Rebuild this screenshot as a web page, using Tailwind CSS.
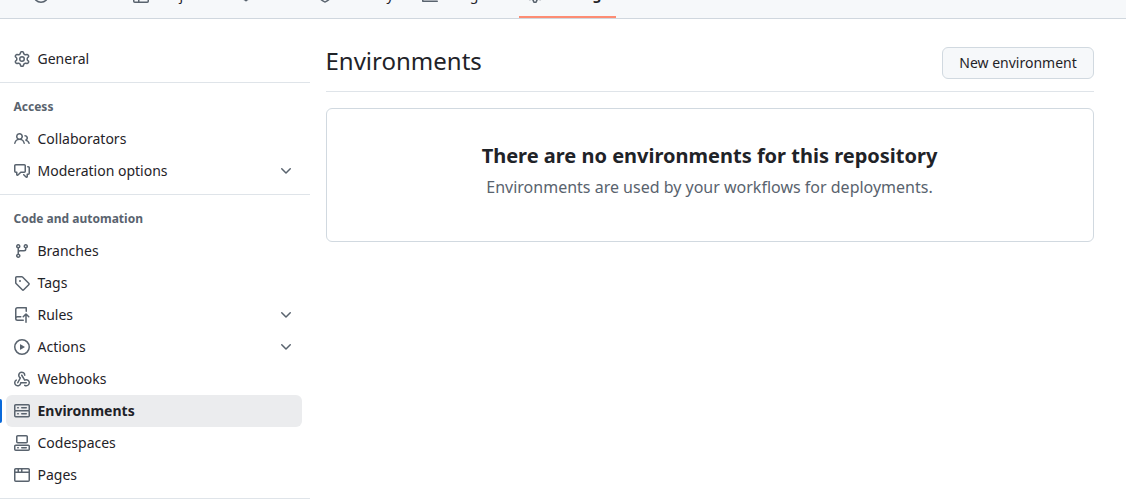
<!DOCTYPE html>
<html lang="en">
<head>
<meta charset="utf-8">
<title>Environments</title>
<script src="https://cdn.jsdelivr.net/npm/@tailwindcss/browser@4"></script>
</head>
<body class="h-[503px] overflow-hidden bg-white font-['Noto_Sans',sans-serif] text-sm leading-5 text-[#1f2328]">
<svg class="hidden" xmlns="http://www.w3.org/2000/svg">
<symbol id="gear" viewBox="0 0 16 16"><path d="M8 0a8.2 8.2 0 0 1 .701.031C9.444.095 9.99.645 10.16 1.29l.288 1.107c.018.066.079.158.212.224.231.114.454.243.668.386.123.082.233.09.299.071l1.103-.303c.644-.176 1.392.021 1.82.63.27.385.506.792.704 1.218.315.675.111 1.422-.364 1.891l-.814.806c-.049.048-.098.147-.088.294.016.257.016.515 0 .772-.01.147.038.246.088.294l.814.806c.475.469.679 1.216.364 1.891a7.977 7.977 0 0 1-.704 1.217c-.428.61-1.176.807-1.82.63l-1.102-.302c-.067-.019-.177-.011-.3.071a5.909 5.909 0 0 1-.668.386c-.133.066-.194.158-.211.224l-.29 1.106c-.168.646-.715 1.196-1.458 1.26a8.006 8.006 0 0 1-1.402 0c-.743-.064-1.289-.614-1.458-1.26l-.289-1.106c-.018-.066-.079-.158-.212-.224a5.738 5.738 0 0 1-.668-.386c-.123-.082-.233-.09-.299-.071l-1.103.303c-.644.176-1.392-.021-1.82-.63a8.12 8.12 0 0 1-.704-1.218c-.315-.675-.111-1.422.363-1.891l.815-.806c.05-.048.098-.147.088-.294a6.214 6.214 0 0 1 0-.772c.01-.147-.038-.246-.088-.294l-.815-.806C.635 6.045.431 5.298.746 4.623a7.92 7.92 0 0 1 .704-1.217c.428-.61 1.176-.807 1.82-.63l1.102.302c.067.019.177.011.3-.071.214-.143.437-.272.668-.386.133-.066.194-.158.211-.224l.29-1.106C6.009.645 6.556.095 7.299.03 7.53.01 7.764 0 8 0Zm-.571 1.525c-.036.003-.108.036-.137.146l-.289 1.105c-.147.561-.549.967-.998 1.189-.173.086-.34.183-.5.29-.417.278-.97.423-1.529.27l-1.103-.303c-.109-.03-.175.016-.195.045-.22.312-.412.644-.573.99-.014.031-.021.11.059.19l.815.806c.411.406.562.957.53 1.456a4.709 4.709 0 0 0 0 .582c.032.499-.119 1.05-.53 1.456l-.815.806c-.081.08-.073.159-.059.19.162.346.353.677.573.989.02.03.085.076.195.046l1.102-.303c.56-.153 1.113-.008 1.53.27.161.107.328.204.501.29.447.222.85.629.997 1.189l.289 1.105c.029.109.101.143.137.146a6.6 6.6 0 0 0 1.142 0c.036-.003.108-.036.137-.146l.289-1.105c.147-.561.549-.967.998-1.189.173-.086.34-.183.5-.29.417-.278.97-.423 1.529-.27l1.103.303c.109.029.175-.016.195-.045.22-.313.411-.644.573-.99.014-.031.021-.11-.059-.19l-.815-.806c-.411-.406-.562-.957-.53-1.456a4.709 4.709 0 0 0 0-.582c-.032-.499.119-1.05.53-1.456l.815-.806c.081-.08.073-.159.059-.19a6.464 6.464 0 0 0-.573-.989c-.02-.03-.085-.076-.195-.046l-1.102.303c-.56.153-1.113.008-1.53-.27a4.44 4.44 0 0 0-.501-.29c-.447-.222-.85-.629-.997-1.189l-.289-1.105c-.029-.11-.101-.143-.137-.146a6.6 6.6 0 0 0-1.142 0ZM11 8a3 3 0 1 1-6 0 3 3 0 0 1 6 0ZM9.5 8a1.5 1.5 0 1 0-3.001.001A1.5 1.5 0 0 0 9.5 8Z"/></symbol>
<symbol id="people" viewBox="0 0 16 16"><path d="M2 5.5a3.5 3.5 0 1 1 5.898 2.549 5.508 5.508 0 0 1 3.034 4.084.75.75 0 1 1-1.482.235 4 4 0 0 0-7.9 0 .75.75 0 0 1-1.482-.236A5.507 5.507 0 0 1 3.102 8.05 3.493 3.493 0 0 1 2 5.5ZM11 4a3.001 3.001 0 0 1 2.22 5.018 5.01 5.01 0 0 1 2.56 3.012.749.749 0 0 1-.885.954.752.752 0 0 1-.549-.514 3.507 3.507 0 0 0-2.522-2.372.75.75 0 0 1-.574-.73v-.352a.75.75 0 0 1 .416-.672A1.5 1.5 0 0 0 11 5.5.75.75 0 0 1 11 4Zm-5.5-.5a2 2 0 1 0-.001 3.999A2 2 0 0 0 5.5 3.5Z"/></symbol>
<symbol id="discussion" viewBox="0 0 16 16"><path d="M1.75 1h8.5c.966 0 1.75.784 1.75 1.75v5.5A1.75 1.75 0 0 1 10.25 10H7.061l-2.574 2.573A1.458 1.458 0 0 1 2 11.543V10h-.25A1.75 1.75 0 0 1 0 8.25v-5.5C0 1.784.784 1 1.75 1ZM1.5 2.75v5.5c0 .138.112.25.25.25h1a.75.75 0 0 1 .75.75v2.19l2.72-2.72a.749.749 0 0 1 .53-.22h3.5a.25.25 0 0 0 .25-.25v-5.5a.25.25 0 0 0-.25-.25h-8.5a.25.25 0 0 0-.25.25Zm13 2a.25.25 0 0 0-.25-.25h-.5a.75.75 0 0 1 0-1.5h.5c.966 0 1.75.784 1.75 1.75v5.5A1.75 1.75 0 0 1 14.25 12H14v1.543a1.458 1.458 0 0 1-2.487 1.03L9.22 12.28a.749.749 0 0 1 .326-1.275.749.749 0 0 1 .734.215l2.22 2.22v-2.19a.75.75 0 0 1 .75-.75h1a.25.25 0 0 0 .25-.25Z"/></symbol>
<symbol id="branch" viewBox="0 0 16 16"><path d="M9.5 3.25a2.25 2.25 0 1 1 3 2.122V6A2.5 2.5 0 0 1 10 8.5H6a1 1 0 0 0-1 1v1.128a2.251 2.251 0 1 1-1.5 0V5.372a2.25 2.25 0 1 1 1.5 0v1.836A2.493 2.493 0 0 1 6 7h4a1 1 0 0 0 1-1v-.628A2.25 2.25 0 0 1 9.5 3.25Zm-6 0a.75.75 0 1 0 1.5 0 .75.75 0 0 0-1.5 0Zm8.25-.75a.75.75 0 1 0 0 1.5.75.75 0 0 0 0-1.5ZM4.25 12a.75.75 0 1 0 0 1.5.75.75 0 0 0 0-1.5Z"/></symbol>
<symbol id="tag" viewBox="0 0 16 16"><path d="M1 7.775V2.75C1 1.784 1.784 1 2.75 1h5.025c.464 0 .91.184 1.238.513l6.25 6.25a1.75 1.75 0 0 1 0 2.474l-5.026 5.026a1.75 1.75 0 0 1-2.474 0l-6.25-6.25A1.752 1.752 0 0 1 1 7.775Zm1.5 0c0 .066.026.13.073.177l6.25 6.25a.25.25 0 0 0 .354 0l5.025-5.025a.25.25 0 0 0 0-.354l-6.25-6.25a.25.25 0 0 0-.177-.073H2.75a.25.25 0 0 0-.25.25ZM6 5a1 1 0 1 1 0 2 1 1 0 0 1 0-2Z"/></symbol>
<symbol id="push" viewBox="0 0 16 16"><path d="M1 2.5A2.5 2.5 0 0 1 3.5 0h8.75a.75.75 0 0 1 .75.75v3.5a.75.75 0 0 1-1.5 0V1.5h-8a1 1 0 0 0-1 1v6.708A2.493 2.493 0 0 1 3.5 9h3.25a.75.75 0 0 1 0 1.5H3.5a1 1 0 0 0 0 2h5.75a.75.75 0 0 1 0 1.5H3.5A2.5 2.5 0 0 1 1 11.5Zm13.23 7.79-1.48-1.48v6.44a.75.75 0 0 1-1.5 0V8.81l-1.48 1.48a.749.749 0 0 1-1.275-.326.749.749 0 0 1 .215-.734l2.76-2.76a.75.75 0 0 1 1.06 0l2.76 2.76a.749.749 0 0 1-.326 1.275.749.749 0 0 1-.734-.215Z"/></symbol>
<symbol id="play" viewBox="0 0 16 16"><path d="M8 0a8 8 0 1 1 0 16A8 8 0 0 1 8 0ZM1.5 8a6.5 6.5 0 1 0 13 0 6.5 6.5 0 0 0-13 0Zm4.879-2.773 4.264 2.559a.25.25 0 0 1 0 .428l-4.264 2.559A.25.25 0 0 1 6 10.559V5.442a.25.25 0 0 1 .379-.215Z"/></symbol>
<symbol id="webhook" viewBox="0 0 16 16"><path d="M5.5 4.25a2.25 2.25 0 0 1 4.5 0 .75.75 0 0 0 1.5 0 3.75 3.75 0 1 0-6.14 2.889l-2.272 4.258a.75.75 0 0 0 1.324.706L7 7.25a.75.75 0 0 0-.309-1.015A2.25 2.25 0 0 1 5.5 4.25Z"/><path d="M7.364 3.607a.75.75 0 0 1 1.03.257l2.608 4.349a3.75 3.75 0 1 1-.628 6.785.75.75 0 0 1 .752-1.299 2.25 2.25 0 1 0-.033-3.88.75.75 0 0 1-1.03-.256L7.107 4.636a.75.75 0 0 1 .257-1.03Z"/><path d="M2.9 8.776A.75.75 0 0 1 2.625 9.8 2.25 2.25 0 1 0 6 11.75a.75.75 0 0 1 .75-.751h5.5a.75.75 0 0 1 0 1.5H7.425a3.751 3.751 0 1 1-5.55-3.998.75.75 0 0 1 1.024.274Z"/></symbol>
<symbol id="server" viewBox="0 0 16 16"><path d="M1.75 1h12.5c.966 0 1.75.784 1.75 1.75v4c0 .372-.116.717-.314 1 .198.283.314.628.314 1v4a1.75 1.75 0 0 1-1.75 1.75H1.75A1.75 1.75 0 0 1 0 12.75v-4c0-.358.109-.707.314-1a1.739 1.739 0 0 1-.314-1v-4C0 1.784.784 1 1.75 1ZM1.5 2.75v4c0 .138.112.25.25.25h12.5a.25.25 0 0 0 .25-.25v-4a.25.25 0 0 0-.25-.25H1.75a.25.25 0 0 0-.25.25Zm.25 5.75a.25.25 0 0 0-.25.25v4c0 .138.112.25.25.25h12.5a.25.25 0 0 0 .25-.25v-4a.25.25 0 0 0-.25-.25ZM7 4.75A.75.75 0 0 1 7.75 4h4.5a.75.75 0 0 1 0 1.5h-4.5A.75.75 0 0 1 7 4.75ZM7.75 10h4.5a.75.75 0 0 1 0 1.5h-4.5a.75.75 0 0 1 0-1.5ZM3 4.75A.75.75 0 0 1 3.75 4h.5a.75.75 0 0 1 0 1.5h-.5A.75.75 0 0 1 3 4.75ZM3.75 10h.5a.75.75 0 0 1 0 1.5h-.5a.75.75 0 0 1 0-1.5Z"/></symbol>
<symbol id="codespaces" viewBox="0 0 16 16"><path d="M0 11.25c0-.966.784-1.75 1.75-1.75h12.5c.966 0 1.75.784 1.75 1.75v3A1.75 1.75 0 0 1 14.25 16H1.75A1.75 1.75 0 0 1 0 14.25Zm2-9.5C2 .784 2.784 0 3.75 0h8.5C13.216 0 14 .784 14 1.75v5a1.75 1.75 0 0 1-1.75 1.75h-8.5A1.75 1.75 0 0 1 2 6.75Zm1.75-.25a.25.25 0 0 0-.25.25v5c0 .138.112.25.25.25h8.5a.25.25 0 0 0 .25-.25v-5a.25.25 0 0 0-.25-.25Zm-2 9.5a.25.25 0 0 0-.25.25v3c0 .138.112.25.25.25h12.5a.25.25 0 0 0 .25-.25v-3a.25.25 0 0 0-.25-.25Z"/><path d="M7 12.75a.75.75 0 0 1 .75-.75h4.5a.75.75 0 0 1 0 1.5h-4.5a.75.75 0 0 1-.75-.75Zm-4 0a.75.75 0 0 1 .75-.75h.5a.75.75 0 0 1 0 1.5h-.5a.75.75 0 0 1-.75-.75Z"/></symbol>
<symbol id="browser" viewBox="0 0 16 16"><path d="M0 2.75C0 1.784.784 1 1.75 1h12.5c.966 0 1.75.784 1.75 1.75v10.5A1.75 1.75 0 0 1 14.25 15H1.75A1.75 1.75 0 0 1 0 13.25ZM14.5 6h-13v7.25c0 .138.112.25.25.25h12.5a.25.25 0 0 0 .25-.25Zm-6-3.5v2h6V2.75a.25.25 0 0 0-.25-.25ZM5 2.5v2h2v-2Zm-3.25 0a.25.25 0 0 0-.25.25V4.5h2v-2Z"/></symbol>
<symbol id="chevron" viewBox="0 0 16 16"><path d="M12.78 5.22a.749.749 0 0 1 0 1.06l-4.25 4.25a.749.749 0 0 1-1.06 0L3.22 6.28a.749.749 0 1 1 1.06-1.06L8 8.939l3.72-3.719a.749.749 0 0 1 1.06 0Z"/></symbol>
<symbol id="table" viewBox="0 0 16 16"><path d="M0 1.75C0 .784.784 0 1.75 0h12.5C15.216 0 16 .784 16 1.75v12.5A1.75 1.75 0 0 1 14.25 16H1.75A1.75 1.75 0 0 1 0 14.25ZM6.5 6.5v8h7.75a.25.25 0 0 0 .25-.25V6.5Zm8-1.5V1.75a.25.25 0 0 0-.25-.25H6.5V5Zm-13 1.5v7.75c0 .138.112.25.25.25H5v-8ZM5 5V1.5H1.75a.25.25 0 0 0-.25.25V5Z"/></symbol>
<symbol id="book" viewBox="0 0 16 16"><path d="M0 1.75A.75.75 0 0 1 .75 1h4.253c1.227 0 2.317.59 3 1.501A3.743 3.743 0 0 1 11.006 1h4.245a.75.75 0 0 1 .75.75v10.5a.75.75 0 0 1-.75.75h-4.507a2.25 2.25 0 0 0-1.591.659l-.622.621a.75.75 0 0 1-1.06 0l-.622-.621A2.25 2.25 0 0 0 5.258 13H.75a.75.75 0 0 1-.75-.75Zm7.251 10.324.004-5.073-.002-2.253A2.25 2.25 0 0 0 5.003 2.5H1.5v9h3.757a3.75 3.75 0 0 1 1.994.574ZM8.755 4.75l-.004 7.322a3.752 3.752 0 0 1 1.992-.572H14.5v-9h-3.495a2.25 2.25 0 0 0-2.25 2.25Z"/></symbol>
<symbol id="shield" viewBox="0 0 16 16"><path d="M7.467.133a1.748 1.748 0 0 1 1.066 0l5.25 1.68A1.75 1.75 0 0 1 15 3.48V7c0 1.566-.32 3.182-1.303 4.682-.983 1.498-2.585 2.813-5.032 3.855a1.697 1.697 0 0 1-1.33 0c-2.447-1.042-4.049-2.357-5.032-3.855C1.32 10.182 1 8.566 1 7V3.48a1.75 1.75 0 0 1 1.217-1.667Zm.61 1.429a.25.25 0 0 0-.153 0l-5.25 1.68a.25.25 0 0 0-.174.238V7c0 1.358.275 2.666 1.057 3.86.784 1.194 2.121 2.34 4.366 3.297a.196.196 0 0 0 .154 0c2.245-.956 3.582-2.104 4.366-3.298C13.225 9.666 13.5 8.36 13.5 7V3.48a.251.251 0 0 0-.174-.237l-5.25-1.68Z"/></symbol>
<symbol id="graph" viewBox="0 0 16 16"><path d="M1.5 1.75V13.5h13.75a.75.75 0 0 1 0 1.5H.75a.75.75 0 0 1-.75-.75V1.75a.75.75 0 0 1 1.5 0Zm14.28 2.53-5.25 5.25a.75.75 0 0 1-1.06 0L7 7.06 4.28 9.78a.751.751 0 0 1-1.06-1.06l3.25-3.25a.75.75 0 0 1 1.06 0L10 7.94l4.72-4.72a.751.751 0 0 1 1.06 1.06Z"/></symbol>
</svg>

<header class="flex h-[19px] items-end overflow-hidden border-b border-[#d0d7de] bg-[#f6f8fa] pl-[25px]">
  <nav class="flex h-12 shrink-0">
    <a class="flex h-[38px] w-[100px] items-start gap-2 px-2 pt-[17px]"><svg class="size-4 shrink-0 fill-[#59636e]"><use href="#play"/></svg><span class="-mt-0.5">Actions</span></a>
    <a class="flex h-[38px] w-[105px] items-start gap-2 px-2 pt-[17px]"><svg class="size-4 shrink-0 fill-[#59636e]"><use href="#table"/></svg><span class="-mt-0.5">Projects</span></a>
    <a class="flex h-[38px] w-[79px] items-start gap-2 px-2 pt-[17px]"><svg class="size-4 shrink-0 fill-[#59636e]"><use href="#book"/></svg><span class="-mt-0.5">Wiki</span></a>
    <a class="flex h-[38px] w-[105px] items-start gap-2 px-2 pt-[17px]"><svg class="size-4 shrink-0 fill-[#59636e]"><use href="#shield"/></svg><span class="-mt-0.5">Security</span></a>
    <a class="flex h-[38px] w-[105px] items-start gap-2 px-2 pt-[17px]"><svg class="size-4 shrink-0 fill-[#59636e]"><use href="#graph"/></svg><span class="-mt-0.5">Insights</span></a>
    <a class="flex h-12 w-[97px] items-start gap-2 border-b-2 border-[#fd8c73] px-2 pt-[17px] font-bold"><svg class="size-4 shrink-0 fill-[#59636e]"><use href="#gear"/></svg><span class="-mt-0.5">Settings</span></a>
  </nav>
</header>

<div class="flex">
  <aside class="w-[310px] shrink-0 pt-6">
    <ul>
      <li class="flex h-8 items-center gap-[7.5px] pl-3.5"><svg class="size-4 fill-[#59636e]"><use href="#gear"/></svg>General</li>
    </ul>
    <hr class="mt-[7px] border-[#d1d9e0b3]">
    <h3 class="mt-[15px] h-[25px] pl-[13.5px] text-xs leading-[18px] font-bold text-[#59636e]">Access</h3>
    <ul>
      <li class="flex h-8 items-center gap-[7.5px] pl-3.5"><svg class="size-4 fill-[#59636e]"><use href="#people"/></svg>Collaborators</li>
      <li class="flex h-8 items-center gap-[7.5px] pr-4 pl-3.5"><svg class="size-4 fill-[#59636e]"><use href="#discussion"/></svg>Moderation options<svg class="ml-auto size-4 fill-[#59636e]"><use href="#chevron"/></svg></li>
    </ul>
    <hr class="mt-[7px] border-[#d1d9e0b3]">
    <h3 class="mt-[15px] h-[25px] pl-[13.5px] text-xs leading-[18px] font-bold text-[#59636e]">Code and automation</h3>
    <ul>
      <li class="flex h-8 items-center gap-[7.5px] pl-3.5"><svg class="size-4 fill-[#59636e]"><use href="#branch"/></svg>Branches</li>
      <li class="flex h-8 items-center gap-[7.5px] pl-3.5"><svg class="size-4 fill-[#59636e]"><use href="#tag"/></svg>Tags</li>
      <li class="flex h-8 items-center gap-[7.5px] pr-4 pl-3.5"><svg class="size-4 fill-[#59636e]"><use href="#push"/></svg>Rules<svg class="ml-auto size-4 fill-[#59636e]"><use href="#chevron"/></svg></li>
      <li class="flex h-8 items-center gap-[7.5px] pr-4 pl-3.5"><svg class="size-4 fill-[#59636e]"><use href="#play"/></svg>Actions<svg class="ml-auto size-4 fill-[#59636e]"><use href="#chevron"/></svg></li>
      <li class="flex h-8 items-center gap-[7.5px] pl-3.5"><svg class="size-4 fill-[#59636e]"><use href="#webhook"/></svg>Webhooks</li>
      <li class="flex h-8 items-center gap-1 pr-2"><span class="h-6 w-0.5 rounded-r-md bg-[#0969da]"></span><span class="flex h-8 grow items-center gap-[7.5px] rounded-md bg-[#ebecee] pl-2 font-bold"><svg class="size-4 fill-[#59636e]"><use href="#server"/></svg>Environments</span></li>
      <li class="flex h-8 items-center gap-[7.5px] pl-3.5"><svg class="size-4 fill-[#59636e]"><use href="#codespaces"/></svg>Codespaces</li>
      <li class="flex h-8 items-center gap-[7.5px] pl-3.5"><svg class="size-4 fill-[#59636e]"><use href="#browser"/></svg>Pages</li>
    </ul>
    <hr class="mt-[7px] border-[#d1d9e0b3]">
  </aside>

  <main class="ml-4 w-[768px] pt-7">
    <div class="flex h-[45px] items-start justify-between border-b border-[#d1d9e0b3]">
      <h2 class="-mt-1 -ml-[0.5px] text-2xl leading-9">Environments</h2>
      <button class="h-8 w-[152px] rounded-md border border-[#d1d9e0] bg-[#f6f8fa]">New environment</button>
    </div>
    <section class="mt-4 h-[134px] rounded-md border border-[#d1d9e0] pt-8 pr-px text-center">
      <h3 class="text-xl leading-[30px] font-bold">There are no environments for this repository</h3>
      <p class="mt-1 text-base leading-6 text-[#59636e]">Environments are used by your workflows for deployments.</p>
    </section>
  </main>
</div>
</body>
</html>
